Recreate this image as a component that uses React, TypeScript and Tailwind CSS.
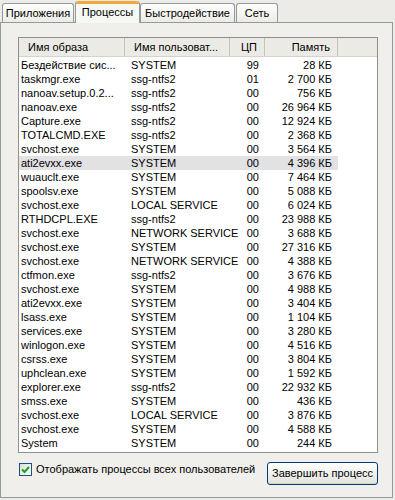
import React from "react";

const rows: [string, string, string, string][] = [
  ["Бездействие сис...", "SYSTEM", "99", "28 КБ"],
  ["taskmgr.exe", "ssg-ntfs2", "01", "2 700 КБ"],
  ["nanoav.setup.0.2...", "ssg-ntfs2", "00", "756 КБ"],
  ["nanoav.exe", "ssg-ntfs2", "00", "26 964 КБ"],
  ["Capture.exe", "ssg-ntfs2", "00", "12 924 КБ"],
  ["TOTALCMD.EXE", "ssg-ntfs2", "00", "2 368 КБ"],
  ["svchost.exe", "SYSTEM", "00", "3 564 КБ"],
  ["ati2evxx.exe", "SYSTEM", "00", "4 396 КБ"],
  ["wuauclt.exe", "SYSTEM", "00", "7 464 КБ"],
  ["spoolsv.exe", "SYSTEM", "00", "5 088 КБ"],
  ["svchost.exe", "LOCAL SERVICE", "00", "6 024 КБ"],
  ["RTHDCPL.EXE", "ssg-ntfs2", "00", "23 988 КБ"],
  ["svchost.exe", "NETWORK SERVICE", "00", "3 688 КБ"],
  ["svchost.exe", "SYSTEM", "00", "27 316 КБ"],
  ["svchost.exe", "NETWORK SERVICE", "00", "4 388 КБ"],
  ["ctfmon.exe", "ssg-ntfs2", "00", "3 676 КБ"],
  ["svchost.exe", "SYSTEM", "00", "4 988 КБ"],
  ["ati2evxx.exe", "SYSTEM", "00", "3 404 КБ"],
  ["lsass.exe", "SYSTEM", "00", "1 104 КБ"],
  ["services.exe", "SYSTEM", "00", "3 280 КБ"],
  ["winlogon.exe", "SYSTEM", "00", "4 516 КБ"],
  ["csrss.exe", "SYSTEM", "00", "3 804 КБ"],
  ["uphclean.exe", "SYSTEM", "00", "1 592 КБ"],
  ["explorer.exe", "ssg-ntfs2", "00", "22 932 КБ"],
  ["smss.exe", "SYSTEM", "00", "436 КБ"],
  ["svchost.exe", "LOCAL SERVICE", "00", "3 876 КБ"],
  ["svchost.exe", "SYSTEM", "00", "4 588 КБ"],
  ["System", "SYSTEM", "00", "244 КБ"],
];

export default function App() {
  return (
    <div
      className="h-[500px] w-[395px] bg-[#ecebe7] text-[11px] leading-none text-black"
      style={{ fontFamily: '"Liberation Sans", Arial, sans-serif' }}
    >
      <div className="flex h-[22px] items-end pl-[2px]">
        <div className="flex h-[19px] w-[72px] items-center justify-center whitespace-nowrap rounded-t-[3px] border border-b-0 border-[#919b9c] bg-gradient-to-b from-[#fefefe] to-[#ecebe6]">
          Приложения
        </div>
        <div className="relative z-10 -mb-px ml-px flex h-[22px] w-[65px] flex-col rounded-t-[3px] border-x border-[#919b9c] bg-[#f7f7f4]">
          <div className="h-[3px] rounded-t-[3px] bg-[#f0a83a]" />
          <div className="flex flex-1 items-center justify-center whitespace-nowrap pb-[2px]">Процессы</div>
        </div>
        <div className="flex h-[19px] w-[95px] items-center justify-center whitespace-nowrap rounded-t-[3px] border border-b-0 border-[#919b9c] bg-gradient-to-b from-[#fefefe] to-[#ecebe6]">
          Быстродействие
        </div>
        <div className="ml-px flex h-[19px] w-[42px] items-center justify-center whitespace-nowrap rounded-t-[3px] border border-b-0 border-[#919b9c] bg-gradient-to-b from-[#fefefe] to-[#ecebe6]">
          Сеть
        </div>
      </div>
      <div className="mr-[2px] h-[476px] border border-[#919b9c] bg-[#f0efeb] pl-[17px] pr-[14px] pt-[14px]">
        <div className="h-[416px] border border-[#8e8f8f] bg-white">
          <div className="flex h-[19px] border-b border-[#d6d3ce] bg-[#ebeae5]">
            <div className="flex w-[106px] items-center border-r border-[#c7c5b2] pl-[9px]">Имя образа</div>
            <div className="flex w-[105px] items-center whitespace-nowrap border-r border-[#c7c5b2] pl-[9px]">Имя пользоват...</div>
            <div className="flex w-[35px] items-center justify-end border-r border-[#c7c5b2] pr-[7px]">ЦП</div>
            <div className="flex w-[73px] items-center justify-end border-r border-[#c7c5b2] pr-[7px]">Память</div>
            <div className="flex-1" />
          </div>
          <div className="flex flex-col pt-px">
            {rows.map((r, i) => (
              <div key={i} className="flex h-[14px] items-center">
                <div className={`flex h-[14px] w-[319px] items-center ${i === 7 ? "bg-[#e2e1e4]" : ""}`}>
                  <div className="w-[106px] whitespace-nowrap pl-[2px]">{r[0]}</div>
                  <div className="w-[105px] whitespace-nowrap pl-[6px]">{r[1]}</div>
                  <div className="w-[35px] pr-[6px] text-right">{r[2]}</div>
                  <div className="w-[73px] whitespace-nowrap pr-[6px] text-right">{r[3]}</div>
                </div>
              </div>
            ))}
          </div>
        </div>
        <div className="mt-[9px] flex items-start justify-between">
          <div className="mt-[1px] flex items-center gap-[4px] whitespace-nowrap pl-px">
            <div className="flex h-[13px] w-[13px] items-center justify-center border border-[#1c5180] bg-gradient-to-br from-[#dcdcd7] to-white">
              <svg width="9" height="9" viewBox="0 0 9 9">
                <path d="M1 4.5 L3.5 7 L8 2" fill="none" stroke="#21a121" strokeWidth="2" />
              </svg>
            </div>
            <span>Отображать процессы всех пользователей</span>
          </div>
          <div className="flex h-[23px] w-[111px] items-center justify-center whitespace-nowrap rounded-[3px] border border-[#003c74] bg-gradient-to-b from-white to-[#e3e2dc] shadow-[inset_0_-1px_0_#d6d0c5]">
            Завершить процесс
          </div>
        </div>
      </div>
    </div>
  );
}
